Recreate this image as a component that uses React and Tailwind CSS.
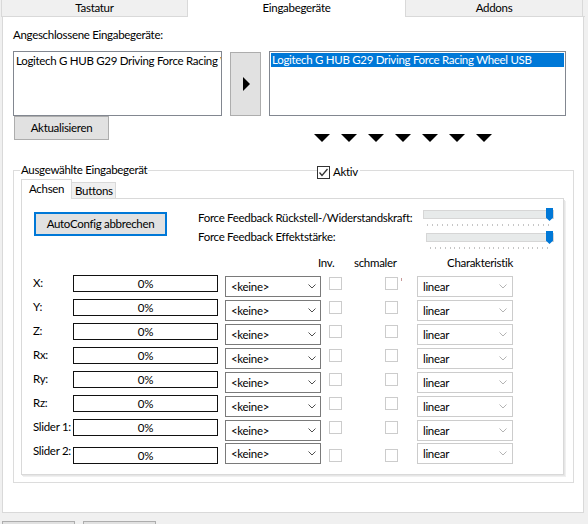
import React from 'react';

const rows = [
  { label: 'X:' },
  { label: 'Y:' },
  { label: 'Z:' },
  { label: 'Rx:' },
  { label: 'Ry:' },
  { label: 'Rz:' },
  { label: 'Slider 1:' },
  { label: 'Slider 2:', last: true },
];

function Chevron({ light }) {
  return (
    <svg width="8" height="5" viewBox="0 0 8 5" className="shrink-0">
      <polyline points="0.5,0.5 4,4 7.5,0.5" fill="none" stroke={light ? '#b4b4b4' : '#505050'} strokeWidth="1" />
    </svg>
  );
}

function Slider({ width }) {
  return (
    <div className="relative h-[9px] border border-[#d6d6d6] bg-[#e7eaea]" style={{ width }}>
      <div className="absolute right-0 top-[-3px] h-[13px] w-[7px] bg-[#0078d7] [clip-path:polygon(0_0,100%_0,100%_75%,50%_100%,0_75%)]" />
    </div>
  );
}

function Ticks({ width }) {
  return (
    <div className="flex h-[2px] justify-between" style={{ width }}>
      {Array.from({ length: 25 }).map((_, i) => (
        <div key={i} className="h-[2px] w-px bg-[#c6c6c6]" />
      ))}
    </div>
  );
}

function AxisRow({ label, last }) {
  return (
    <div className={`flex items-start ${last ? 'h-[22px]' : 'h-[24px]'}`}>
      <div className="ml-[11px] w-[40px] whitespace-nowrap leading-[16px]">{label}</div>
      <div className={`flex h-[17px] w-[145px] items-center justify-center border border-[#111] leading-[15px] ${last ? 'mt-[4px]' : ''}`}>
        0%
      </div>
      <div className={`ml-[7px] flex h-[21px] w-[96px] items-center justify-between border border-[#7a7a7a] bg-white pl-[5px] pr-[4px] ${last ? '' : 'mt-[1px]'}`}>
        <span>&lt;keine&gt;</span>
        <Chevron />
      </div>
      <div className={`ml-[8px] h-[13px] w-[13px] border border-[#cccccc] ${last ? 'mt-[6px]' : 'mt-[2px]'}`} />
      <div className={`ml-[43px] h-[13px] w-[13px] border border-[#cccccc] ${last ? 'mt-[6px]' : 'mt-[2px]'}`} />
      <div className="w-[19px]">
        {label === 'X:' && <div className="ml-[3px] mt-[3px] h-[3px] w-px bg-[#c79a9a]" />}
      </div>
      <div className={`flex h-[21px] w-[96px] items-center justify-between border border-[#cccccc] bg-white pl-[5px] pr-[5px] ${last ? '' : 'mt-[1px]'}`}>
        <span>linear</span>
        <Chevron light />
      </div>
    </div>
  );
}

export default function App() {
  return (
    <div className="flex h-[524px] w-[588px] flex-col overflow-hidden bg-[#f0f0f0] text-[11.5px] tracking-[-0.3px] text-black [font-family:Lato,'Liberation_Sans',sans-serif]">
      {/* Main tabs */}
      <div className="flex h-[17px] shrink-0">
        <div className="ml-[1px] h-[17px] w-[187px] border-x border-b border-[#d9d9d9] text-center leading-[15px]">Tastatur</div>
        <div className="h-[17px] w-[217px] bg-white text-center leading-[15px]">Eingabegeräte</div>
        <div className="h-[17px] w-[178px] border-x border-b border-[#d9d9d9] text-center leading-[15px]">Addons</div>
        <div className="h-[17px] w-[2px] border-b border-[#d9d9d9]" />
      </div>

      {/* Page */}
      <div className="ml-[2px] flex h-[496px] w-[582px] shrink-0 flex-col border-x border-b border-[#d9d9d9] bg-white">
        <div className="ml-[10px] mt-[10px] leading-[16px]">Angeschlossene Eingabegeräte:</div>

        <div className="mt-[8px] flex items-start">
          <div className="ml-[10px] h-[65px] w-[209px] overflow-hidden whitespace-nowrap border border-[#828790] pl-[2px] pt-[1px] leading-[15px]">
            Logitech G HUB G29 Driving Force Racing Wheel USB
          </div>
          <button className="ml-[8px] mt-[1px] flex h-[64px] w-[31px] items-center justify-center border border-[#adadad] bg-[#e1e1e1]">
            <div className="ml-[2px] h-0 w-0 border-y-[7px] border-l-[7px] border-y-transparent border-l-black" />
          </button>
          <div className="ml-[8px] h-[65px] w-[297px] overflow-hidden border border-[#828790] p-px">
            <div className="h-[14px] whitespace-nowrap bg-[#0078d7] pl-px leading-[14px] text-white">
              Logitech G HUB G29 Driving Force Racing Wheel USB
            </div>
          </div>
        </div>

        <div className="flex items-start">
          <button className="ml-[11px] h-[24px] w-[95px] border border-[#adadad] bg-[#e1e1e1] leading-[20px]">Aktualisieren</button>
          <div className="ml-[205px] mt-[18px] flex gap-[11px]">
            {Array.from({ length: 7 }).map((_, i) => (
              <div key={i} className="h-0 w-0 border-x-[8px] border-t-[8px] border-x-transparent border-t-black" />
            ))}
          </div>
        </div>

        {/* Group box */}
        <div className="relative ml-[10px] mt-[28px] h-[313px] w-[561px] border border-[#dcdcdc]">
          <div className="absolute left-[6px] top-[-9px] bg-white px-px leading-[16px]">Ausgewählte Eingabegerät</div>
          <div className="absolute left-[303px] top-[-7px] flex items-center gap-[3px] bg-white pr-[2px] leading-[16px]">
            <div className="flex h-[13px] w-[13px] items-center justify-center border border-[#333]">
              <svg width="11" height="11" viewBox="0 0 11 11">
                <polyline points="1.5,5.5 4,8.5 9.5,2" fill="none" stroke="#333" strokeWidth="1.3" />
              </svg>
            </div>
            <span>Aktiv</span>
          </div>

          <div className="ml-[7px] mt-[8px] flex h-[20px] w-[543px] items-end">
            <div className="h-[20px] w-[51px] border-x border-t border-[#d9d9d9] bg-white pl-[7px] leading-[18px]">Achsen</div>
            <div className="h-[17px] w-[44px] border-y border-r border-[#d9d9d9] bg-[#f0f0f0] pl-[3px] leading-[16px]">Buttons</div>
            <div className="h-[17px] flex-1 border-b border-[#d9d9d9]" />
          </div>

          <div className="ml-[7px] h-[276px] w-[543px] border-x border-b border-[#d9d9d9] shadow-[1px_1px_0_#e6e6e6,2px_2px_0_#f0f0f0]">
            <div className="flex h-[56px] items-start">
              <button className="ml-[12px] mt-[13px] h-[24px] w-[133px] border-2 border-[#0078d7] bg-[#e1e1e1] leading-[18px]">
                AutoConfig abbrechen
              </button>
              <div className="ml-[31px] mt-[11px] w-[225px] whitespace-nowrap leading-[16px]">
                <div>Force Feedback Rückstell-/Widerstandskraft:</div>
                <div className="mt-[3px]">Force Feedback Effektstärke:</div>
              </div>
              <div className="mt-[11px] flex flex-col">
                <Slider width={131} />
                <div className="ml-[4px] mt-[5px]">
                  <Ticks width={122} />
                </div>
                <div className="ml-[3px] mt-[7px]">
                  <Slider width={128} />
                </div>
                <div className="ml-[7px] mt-[5px]">
                  <Ticks width={118} />
                </div>
              </div>
            </div>

            <div className="flex h-[16px] leading-[16px]">
              <span className="ml-[296px] w-[36px]">Inv.</span>
              <span className="w-[93px]">schmaler</span>
              <span>Charakteristik</span>
            </div>

            <div className="mt-[4px] flex flex-col">
              {rows.map((r) => (
                <AxisRow key={r.label} label={r.label} last={r.last} />
              ))}
            </div>
          </div>
        </div>
      </div>

      <div className="ml-[2px] mt-[8px] flex gap-[8px]">
        <div className="h-[20px] w-[73px] border border-[#adadad] bg-[#e1e1e1]" />
        <div className="h-[20px] w-[73px] border border-[#adadad] bg-[#e1e1e1]" />
      </div>
    </div>
  );
}
